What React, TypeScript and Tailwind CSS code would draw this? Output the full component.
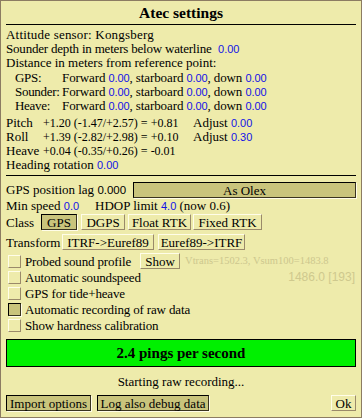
import React from "react";

const serif = { fontFamily: '"Liberation Serif", "Times New Roman", serif' };

function N({ children }: { children: React.ReactNode }) {
  return (
    <span className="text-[11px] text-[#1212e6]" style={{ fontFamily: '"Liberation Sans", Arial, sans-serif' }}>
      {children}
    </span>
  );
}

function Btn({ children, pressed, className = "" }: { children: React.ReactNode; pressed?: boolean; className?: string }) {
  const base = "h-full flex items-center justify-center whitespace-nowrap leading-none";
  const style = pressed
    ? "bg-[#c9c47c] border border-t-black border-l-black border-b-[#3a3420] border-r-[#3a3420] shadow-[1px_1px_0_#fffde8]"
    : "bg-[#eeebab] border border-t-[#fffde8] border-l-[#fffde8] border-b-[#9a8a6a] border-r-[#9a8a6a]";
  return <div className={`${base} ${style} ${className}`}>{children}</div>;
}

function Check({ checked, children, right }: { checked?: boolean; children: React.ReactNode; right?: React.ReactNode }) {
  return (
    <div className="h-[16px] flex items-center">
      <div
        className={
          "ml-[2px] w-[13px] h-[13px] " +
          (checked
            ? "bg-[#c9c47c] border border-t-black border-l-black border-b-[#3a3420] border-r-[#3a3420] shadow-[1px_1px_0_#fffde8]"
            : "border border-t-[#fffde8] border-l-[#fffde8] border-b-[#9a8a6a] border-r-[#9a8a6a]")
        }
      />
      <span className="ml-[4px] tracking-[-0.15px]">{children}</span>
      {right}
    </div>
  );
}

export default function App() {
  return (
    <div className="w-[362px] h-[418px] bg-[#eeebab] border border-[#8c7c62] text-black text-[13px] overflow-hidden" style={serif}>
      <div className="px-[5px] flex flex-col">
        <div className="h-[24px] flex items-center justify-center font-bold text-[15.5px] border-b border-black">
          Atec settings
        </div>
        <div className="pt-[3px] leading-[14.2px]">
          <div className="h-[14.2px] tracking-[0.2px]">Attitude sensor: Kongsberg</div>
          <div className="h-[14.2px]">
            <span className="tracking-[-0.2px]">Sounder depth in meters below waterline</span>&nbsp; <N>0.00</N>
          </div>
          <div className="h-[14.2px]">Distance in meters from reference point:</div>
          {["GPS:", "Sounder:", "Heave:"].map((l) => (
            <div key={l} className="h-[14.2px] flex">
              <span className="ml-[9px] w-[47px] tracking-[-0.3px]">{l}</span>
              <span className="tracking-[-0.1px]">
                Forward <N>0.00</N>, starboard <N>0.00</N>, down <N>0.00</N>
              </span>
            </div>
          ))}
        </div>
        <div className="mt-[3px] leading-[14px]">
          <div className="h-[14px] grid grid-cols-[37px_150px_auto]">
            <span>Pitch</span>
            <span className="text-[12px]">+1.20 (-1.47/+2.57) = +0.81</span>
            <span>
              Adjust <N>0.00</N>
            </span>
          </div>
          <div className="h-[14px] grid grid-cols-[37px_150px_auto]">
            <span>Roll</span>
            <span className="text-[12px]">+1.39 (-2.82/+2.98) = +0.10</span>
            <span>
              Adjust <N>0.30</N>
            </span>
          </div>
          <div className="h-[14px] grid grid-cols-[37px_150px_auto]">
            <span>Heave</span>
            <span className="text-[12px]">+0.04 (-0.35/+0.26) = -0.01</span>
          </div>
          <div className="h-[14px]">
            Heading rotation <N>0.00</N>
          </div>
        </div>
        <div className="mt-[3px] border-b border-black" />
        <div className="pt-[6px] leading-none">
          <div className="h-[16px] flex items-center">
            <span className="w-[127px]">
              GPS position lag{" "}
              <span className="text-[11.5px]" style={{ fontFamily: '"Liberation Sans", Arial, sans-serif' }}>
                0.000
              </span>
            </span>
            <Btn pressed className="flex-1">As Olex</Btn>
          </div>
          <div className="h-[14px] flex items-center">
            <span className="w-[89px]">
              Min speed <N>0.0</N>
            </span>
            <span>
              HDOP limit <N>4.0</N> (now 0.6)
            </span>
          </div>
          <div className="mt-[2px] h-[16px] flex items-center">
            <span className="w-[35px]">Class</span>
            <Btn pressed className="w-[36px]">GPS</Btn>
            <Btn className="w-[44px] ml-[4px]">DGPS</Btn>
            <Btn className="w-[63px] ml-[3px]">Float RTK</Btn>
            <Btn className="w-[69px] ml-[2px]">Fixed RTK</Btn>
          </div>
          <div className="mt-[4px] h-[16px] flex items-center">
            <span className="w-[56px]">Transform</span>
            <Btn className="w-[92px]">ITRF-&gt;Euref89</Btn>
            <Btn className="w-[87px] ml-[4px]">Euref89-&gt;ITRF</Btn>
          </div>
          <div className="mt-[3px]">
            <Check
              right={
                <>
                  <Btn className="w-[40px] ml-[9px]">Show</Btn>
                  <span className="ml-[5px] text-[10.5px] text-[#cdc78e]">Vtrans=1502.3, Vsum100=1483.8</span>
                </>
              }
            >
              Probed sound profile
            </Check>
            <Check
              right={
                <span className="ml-auto mr-[1px] text-[12px] text-[#cfc98e]" style={{ fontFamily: '"Liberation Sans", Arial, sans-serif' }}>
                  1486.0 [193]
                </span>
              }
            >
              Automatic soundspeed
            </Check>
            <Check>GPS for tide+heave</Check>
            <Check checked>Automatic recording of raw data</Check>
            <Check>Show hardness calibration</Check>
          </div>
          <div className="mt-[6px] h-[28px] bg-[#00f000] border border-black flex items-center justify-center font-bold text-[15px]">
            2.4 pings per second
          </div>
          <div className="mt-[7px] h-[14px] flex items-center justify-center">Starting raw recording...</div>
          <div className="mt-[7px] h-[16px] flex items-center">
            <Btn pressed className="w-[85px]">Import options</Btn>
            <Btn pressed className="w-[112px] ml-[6px]">Log also debug data</Btn>
            <Btn className="w-[25px] ml-auto">Ok</Btn>
          </div>
        </div>
      </div>
    </div>
  );
}
